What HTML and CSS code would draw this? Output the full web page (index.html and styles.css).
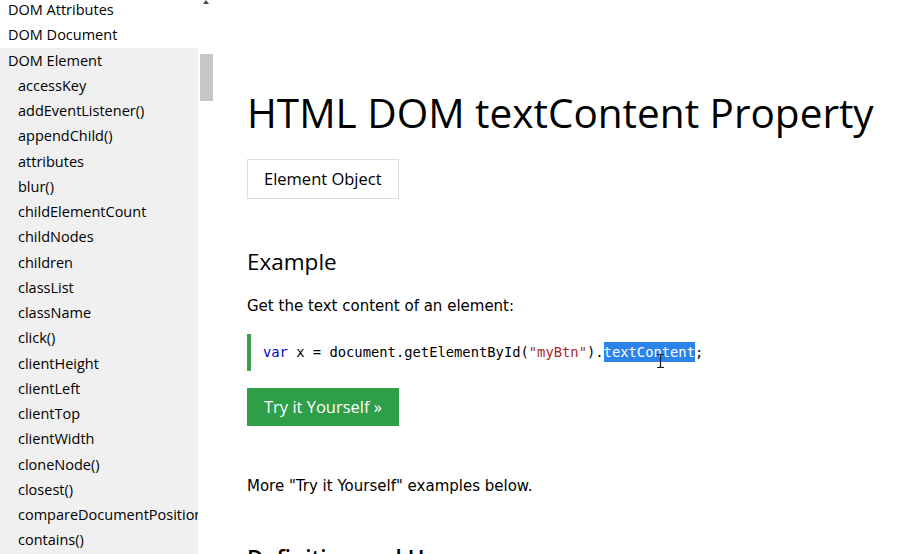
FILE: index.html
```html
<!DOCTYPE html>
<html lang="en">
<head>
<meta charset="utf-8">
<title>HTML DOM textContent Property</title>
<link rel="stylesheet" href="styles.css">
</head>
<body>
<nav class="sidebar">
  <div class="side-list">
    <a class="top">DOM Attributes</a>
    <a class="top">DOM Document</a>
    <div class="group">
      <a class="top">DOM Element</a>
      <a class="sub">accessKey</a>
      <a class="sub">addEventListener()</a>
      <a class="sub">appendChild()</a>
      <a class="sub">attributes</a>
      <a class="sub">blur()</a>
      <a class="sub">childElementCount</a>
      <a class="sub">childNodes</a>
      <a class="sub">children</a>
      <a class="sub">classList</a>
      <a class="sub">className</a>
      <a class="sub">click()</a>
      <a class="sub">clientHeight</a>
      <a class="sub">clientLeft</a>
      <a class="sub">clientTop</a>
      <a class="sub">clientWidth</a>
      <a class="sub">cloneNode()</a>
      <a class="sub">closest()</a>
      <a class="sub">compareDocumentPosition()</a>
      <a class="sub">contains()</a>
    </div>
  </div>
</nav>
<div class="scrollbar">
  <div class="scroll-up"></div>
  <div class="scroll-thumb"></div>
</div>
<main class="main">
  <h1 class="title">HTML DOM textContent Property</h1>
  <a class="ref-btn">Element Object</a>
  <h2 class="heading">Example</h2>
  <p class="text">Get the text content of an element:</p>
  <div class="code">
    <code><span class="kw">var</span> x = document.getElementById(<span class="str">"myBtn"</span>).<span class="sel">textContent</span>;</code>
    <svg class="ibeam" width="9" height="16" viewBox="0 0 9 16">
      <path d="M1 1.5h2.5M5.5 1.5H8M4.5 2v12M1 14.5h2.5M5.5 14.5H8M3.5 1.5l1 0.8 1-0.8M3.5 14.5l1-0.8 1 0.8" stroke="#1a1a1a" stroke-width="1.2" fill="none"/>
    </svg>
  </div>
  <a class="try-btn">Try it Yourself &raquo;</a>
  <p class="text more">More "Try it Yourself" examples below.</p>
  <h2 class="heading def">Definition and Usage</h2>
</main>
</body>
</html>
```
FILE: styles.css
```css
html, body {
  margin: 0;
  padding: 0;
}
body {
  display: flex;
  height: 554px;
  overflow: hidden;
  background: #ffffff;
  color: #000000;
}
.sidebar {
  width: 198px;
  flex: none;
  overflow: hidden;
  font-family: "Open Sans", "Noto Sans", sans-serif;
  font-size: 14.5px;
}
.side-list {
  margin-top: -3px;
}
.group {
  background: #f0f0f0;
  padding-bottom: 10px;
}
.side-list a {
  display: block;
  line-height: 25.25px;
  white-space: nowrap;
  color: #000;
}
.side-list a.top {
  padding-left: 8px;
}
.side-list a.sub {
  padding-left: 18px;
}
.scrollbar {
  width: 16px;
  flex: none;
  display: flex;
  flex-direction: column;
  align-items: flex-start;
}
.scroll-up {
  margin-left: 5px;
  width: 0;
  height: 0;
  border-left: 3.5px solid transparent;
  border-right: 3.5px solid transparent;
  border-bottom: 4px solid #4a4a4a;
}
.scroll-thumb {
  margin-top: 50px;
  margin-left: 2px;
  width: 13px;
  height: 47px;
  background: #c6c6c6;
}
.main {
  flex: 1;
  padding-left: 33px;
  display: flex;
  flex-direction: column;
  align-items: flex-start;
}
.title {
  margin: 89px 0 0 0;
  font-family: "Open Sans", "Noto Sans", sans-serif;
  font-weight: 400;
  font-size: 40.5px;
  line-height: 48px;
  white-space: nowrap;
}
.ref-btn {
  margin-top: 22px;
  border: 1px solid #dddddd;
  padding: 0 16px;
  line-height: 38px;
  font-family: "Open Sans", "Noto Sans", sans-serif;
  font-size: 16.5px;
  color: #000;
}
.heading {
  margin: 48px 0 0 0;
  font-family: "Open Sans", "Noto Sans", sans-serif;
  font-weight: 400;
  font-size: 22.5px;
  line-height: 30px;
  white-space: nowrap;
}
.text {
  margin: 18px 0 0 0;
  font-family: "DejaVu Sans", Verdana, sans-serif;
  font-size: 15px;
  line-height: 22px;
}
.code {
  position: relative;
  margin-top: 17px;
  border-left: 4px solid #3f9f4f;
  padding-left: 12px;
  padding-right: 20px;
  line-height: 37px;
  font-family: "DejaVu Sans Mono", "Liberation Mono", monospace;
  font-size: 13.8px;
  white-space: nowrap;
}
.code code {
  font-family: inherit;
}
.kw {
  color: #0000cd;
}
.str {
  color: #a52a2a;
}
.sel {
  background: #2a84ec;
  color: #ffffff;
  padding: 2px 0;
}
.ibeam {
  position: absolute;
  left: 405px;
  top: 19px;
}
.try-btn {
  margin-top: 17px;
  background: #2e9e48;
  color: #ffffff;
  padding: 0 17px;
  line-height: 38px;
  font-family: "Open Sans", "Noto Sans", sans-serif;
  font-size: 16.5px;
  white-space: nowrap;
}
.more {
  margin-top: 49px;
}
.def {
  margin-top: 47px;
  font-weight: 600;
}
```
